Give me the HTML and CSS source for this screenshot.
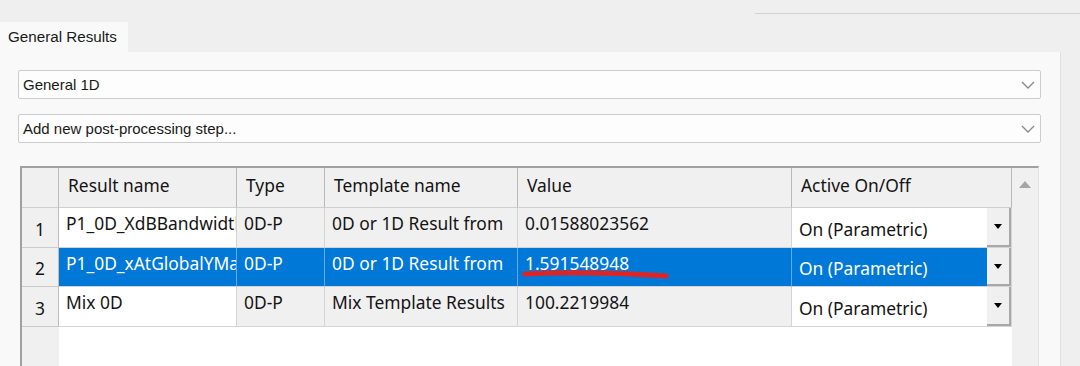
FILE: index.html
```html
<!DOCTYPE html>
<html lang="en">

<head>
    <meta charset="UTF-8">
    <meta name="viewport" content="width=device-width, initial-scale=1.0">
    <title>General Results</title>

    <link rel="stylesheet" href="styles.css">
</head>

<body>
    <div id="window">
        <div class="topbar">
            <div class="topline"></div>
        </div>

        <div class="tabs">
            <div class="tab">General Results</div>
        </div>

        <div class="panel">
            <div class="combo">
                <span>General 1D</span>
                <svg class="chevron" width="14" height="8" viewBox="0 0 14 8">
                    <polyline points="1,1 7,7 13,1" fill="none" stroke="#8a8a8a" stroke-width="1.4" />
                </svg>
            </div>
            <div class="combo second">
                <span>Add new post-processing step...</span>
                <svg class="chevron" width="14" height="8" viewBox="0 0 14 8">
                    <polyline points="1,1 7,7 13,1" fill="none" stroke="#8a8a8a" stroke-width="1.4" />
                </svg>
            </div>

            <div class="grid">
                <div class="grid-body">
                    <div class="results">
                        <!-- header -->
                        <div class="cell hdr corner"></div>
                        <div class="cell hdr">Result name</div>
                        <div class="cell hdr">Type</div>
                        <div class="cell hdr">Template name</div>
                        <div class="cell hdr">Value</div>
                        <div class="cell hdr">Active On/Off</div>

                        <!-- row 1 -->
                        <div class="cell rowhdr">1</div>
                        <div class="cell edit">P1_0D_XdBBandwidth</div>
                        <div class="cell ro">0D-P</div>
                        <div class="cell ro">0D or 1D Result from</div>
                        <div class="cell ro">0.01588023562</div>
                        <div class="cell active">
                            <span class="choice">On (Parametric)</span>
                            <span class="dropbtn"><svg width="8" height="5" viewBox="0 0 8 5"><polygon points="0,0 8,0 4,5" fill="#000" /></svg></span>
                        </div>

                        <!-- row 2, selected -->
                        <div class="cell rowhdr">2</div>
                        <div class="cell sel">P1_0D_xAtGlobalYMax</div>
                        <div class="cell sel">0D-P</div>
                        <div class="cell sel">0D or 1D Result from</div>
                        <div class="cell sel marked">1.591548948
                            <svg class="mark" width="160" height="36" viewBox="0 0 160 36">
                                <path d="M7 26 C 45 24, 100 25, 148 28" fill="none" stroke="#e02424" stroke-width="5" stroke-linecap="round" />
                            </svg>
                        </div>
                        <div class="cell active">
                            <span class="choice sel">On (Parametric)</span>
                            <span class="dropbtn"><svg width="8" height="5" viewBox="0 0 8 5"><polygon points="0,0 8,0 4,5" fill="#000" /></svg></span>
                        </div>

                        <!-- row 3 -->
                        <div class="cell rowhdr">3</div>
                        <div class="cell edit">Mix 0D</div>
                        <div class="cell ro">0D-P</div>
                        <div class="cell ro">Mix Template Results</div>
                        <div class="cell ro">100.2219984</div>
                        <div class="cell active">
                            <span class="choice">On (Parametric)</span>
                            <span class="dropbtn"><svg width="8" height="5" viewBox="0 0 8 5"><polygon points="0,0 8,0 4,5" fill="#000" /></svg></span>
                        </div>
                    </div>
                </div>
                <div class="scrollbar">
                    <svg class="arrow-up" width="12" height="7" viewBox="0 0 12 7">
                        <polygon points="0,7 12,7 6,0" fill="#a6a6a6" />
                    </svg>
                </div>
            </div>
        </div>
    </div>
</body>

</html>
```

FILE: styles.css
```css
* {
    box-sizing: border-box;
    padding: 0;
    margin: 0;
}

body {
    background: #efefef;
    font-family: "Liberation Sans", Arial, sans-serif;
    font-size: 15px;
    color: #1a1a1a;
    height: 366px;
    overflow: hidden;
}

#window {
    width: 1080px;
    height: 366px;
}

.topbar {
    height: 14px;
}

.topline {
    margin-left: 755px;
    height: 14px;
    border-bottom: 1px solid #d2d2d2;
}

.tabs {
    padding-top: 8px;
    display: flex;
}

.tab {
    width: 128px;
    height: 30px;
    line-height: 30px;
    padding-left: 8px;
    background: #f9f9f9;
    font-size: 15.2px;
}

.panel {
    width: 1061px;
    height: 314px;
    background: #f9f9f9;
    border-right: 1px solid #e0e0e0;
    padding: 18px 19px 0 18px;
}

.combo {
    height: 29px;
    border: 1px solid #cdcdcd;
    border-radius: 2px;
    background: #fdfdfd;
    display: flex;
    align-items: center;
    justify-content: space-between;
    padding: 0 5px 0 4px;
}

.combo.second {
    margin-top: 15px;
}

/* grid */

.grid {
    margin-top: 23px;
    margin-left: 2px;
    width: 1019px;
    height: 210px;
    border-top: 2px solid #a0a0a0;
    border-left: 2px solid #a0a0a0;
    border-right: 1px solid #e2e2e2;
    display: flex;
}

.grid-body {
    width: 990px;
    background: linear-gradient(to right, #f0f0f0 37px, #fff 37px);
}

.results {
    display: grid;
    grid-template-columns: 37px 178px 88px 193px 274px 220px;
    grid-template-rows: 40px 40px 39px 40px;
    font-family: "Noto Sans", "Open Sans", sans-serif;
    font-size: 17.4px;
    color: #141414;
}

.cell {
    border-right: 1px solid #d4d4d4;
    border-bottom: 1px solid #d4d4d4;
    padding: 3px 6px 0 7px;
    line-height: 24px;
    white-space: nowrap;
    overflow: hidden;
}

.hdr {
    background: #f0f0f0;
    padding: 5px 0 0 9px;
    border-right: 1px solid #b9b9b9;
    border-bottom: 1px solid #cfcfcf;
}

.corner {
    border-right: 1px solid #bcbcbc;
}

.rowhdr {
    background: #f0f0f0;
    display: flex;
    align-items: center;
    justify-content: center;
    padding: 2px 0 0;
    border-right: 1px solid #bcbcbc;
    border-bottom: 1px solid #cacaca;
}

.edit {
    background: #fff;
}

.ro {
    background: #f0f0f0;
}

.sel {
    background: #0078d7;
    color: #fff;
    border-right-color: #66a8e4;
    border-bottom-color: #d4d4d4;
}

.marked {
    position: relative;
    overflow: visible;
}

.mark {
    position: absolute;
    left: 0;
    top: 0;
}

.active {
    background: #fff;
    display: flex;
    padding: 0;
    overflow: hidden;
}

.choice {
    flex: 1;
    display: flex;
    align-items: center;
    padding: 2px 0 0 7px;
}

.dropbtn {
    width: 24px;
    background: #f0f0f0;
    border-right: 2px solid #a8a8a8;
    border-bottom: 2px solid #a8a8a8;
    display: flex;
    align-items: center;
    justify-content: center;
}

.scrollbar {
    width: 26px;
    background: #f0f0f0;
    display: flex;
    justify-content: center;
    align-items: flex-start;
    padding-top: 13px;
}
```
